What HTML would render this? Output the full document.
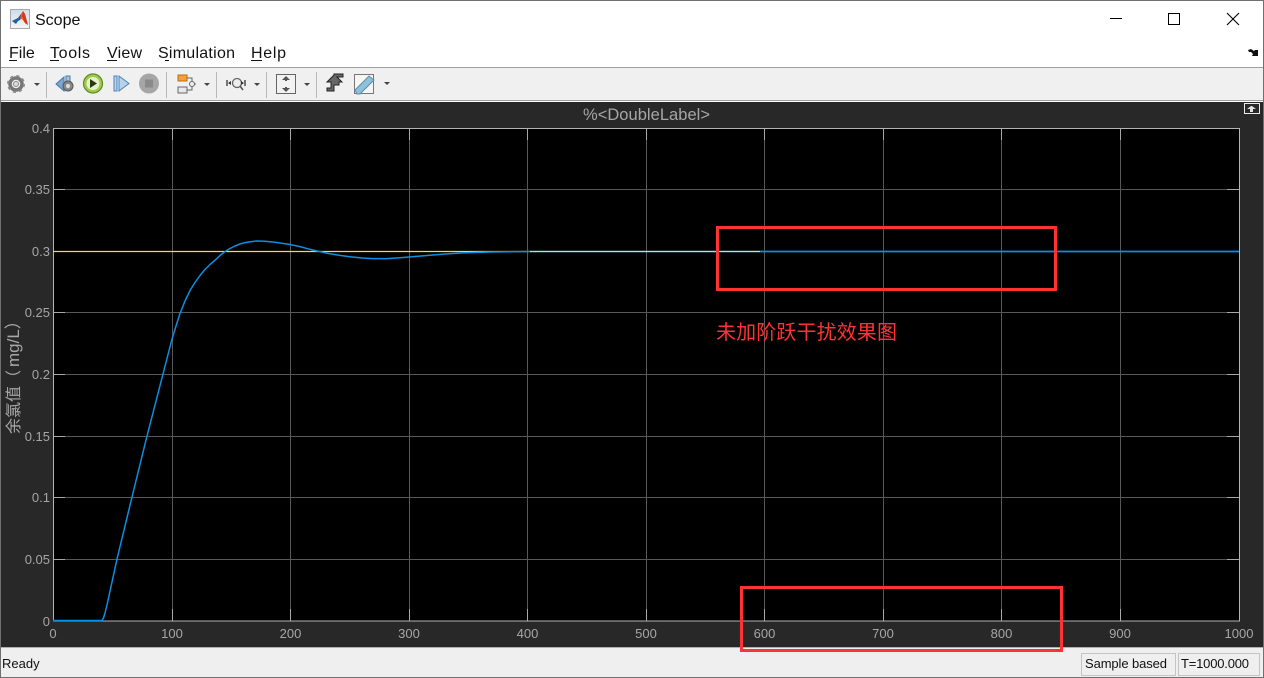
<!DOCTYPE html>
<html><head><meta charset="utf-8"><title>Scope</title>
<style>
html,body{margin:0;padding:0;width:1264px;height:678px;overflow:hidden;background:#fff}
svg{display:block;position:absolute;left:0;top:0}
text{font-family:"Liberation Sans","Noto Sans CJK SC",sans-serif}
</style></head><body>
<svg width="1264" height="678" viewBox="0 0 1264 678" xmlns="http://www.w3.org/2000/svg">
<defs>
<linearGradient id="ic" x1="0" y1="0" x2="0" y2="1"><stop offset="0" stop-color="#cfdcea"/><stop offset="1" stop-color="#f4f6f8"/></linearGradient>
</defs>
<rect width="1264" height="678" fill="#fff"/>
<!-- toolbar -->
<rect x="0" y="67" width="1264" height="34" fill="#f0f0f0"/>
<rect x="0" y="67" width="1264" height="1" fill="#a0a0a0"/>
<rect x="0" y="100" width="1264" height="1" fill="#a0a0a0"/>
<!-- dark -->
<rect x="0" y="102" width="1264" height="545" fill="#282828"/>
<!-- status -->
<rect x="0" y="647" width="1264" height="31" fill="#efefef"/>
<rect x="0" y="647" width="1264" height="1" fill="#b0b0b0"/>
<!-- window border -->
<rect x=".5" y=".5" width="1263" height="677" fill="none" stroke="#707070"/>

<!-- title bar -->
<rect x="10.500" y="9.500" width="19" height="19" fill="url(#ic)" stroke="#a8a8a8"/>
<path d="M12 21l6-3 5-7 2 3 3 11-3-2-3-4-3 1-3 3z" fill="#e8641b"/>
<path d="M12 21l6-3 3-4-1 6-2 1-2 3z" fill="#1d5fa8"/>
<path d="M23 11l2 3 3 11-3-2-3-7z" fill="#d9341c"/>
<text x="35" y="25" font-size="16" fill="#111">Scope</text>
<rect x="1110" y="18" width="12" height="1" fill="#000"/>
<rect x="1168.500" y="13.500" width="11" height="11" fill="none" stroke="#000"/>
<path d="M1227 13l12 12M1239 13l-12 12" stroke="#000" stroke-width="1.1" fill="none"/>

<!-- menu -->
<g font-size="16" fill="#111">
<text x="9" y="58">File</text>
<text x="50" y="58" textLength="40">Tools</text>
<text x="107" y="58" textLength="35">View</text>
<text x="158" y="58" textLength="77">Simulation</text>
<text x="251" y="58" textLength="35">Help</text>
</g>
<g fill="#111">
<rect x="9" y="60" width="8" height="1"/>
<rect x="50" y="60" width="9" height="1"/>
<rect x="107" y="60" width="10" height="1"/>
<rect x="165" y="60" width="4" height="1"/>
<rect x="251" y="60" width="11" height="1"/>
</g>
<path d="M1248 50l3-1 3 2 1-1 3 0v6h-6l1-2-2-2-2 0z" fill="#111"/>

<!-- toolbar icons -->
<g>
<circle cx="16" cy="84" r="6" fill="none" stroke="#777" stroke-width="3.500"/>
<circle cx="16" cy="84" r="8" fill="none" stroke="#8a8a8a" stroke-width="2" stroke-dasharray="3 3.300"/>
<circle cx="16" cy="84" r="2.500" fill="#ddd" stroke="#888"/>
<path d="M34 83h6l-3 3z" fill="#444"/>
<rect x="46" y="72" width="1" height="26" fill="#b8b8b8"/>
<path d="M56 84l8-7v14z" fill="#7ba6cf" stroke="#4a78a8"/>
<path d="M66 76h4v9h-4z" fill="#a9c5df" stroke="#4a78a8"/>
<circle cx="68" cy="86" r="5" fill="#888" stroke="#555"/>
<circle cx="68" cy="86" r="2" fill="#ddd"/>
<circle cx="93" cy="83.500" r="9.500" fill="#9ccb4a" stroke="#5f8a26" stroke-width="1.200"/>
<circle cx="93" cy="83.500" r="6.500" fill="#e6f2c8"/>
<path d="M90 79l7 4.500-7 4.500z" fill="#2c3a14"/>
<rect x="114" y="76" width="3" height="15" fill="#b8d2ea" stroke="#4a82c0"/>
<path d="M119 76l10 7.500-10 7.500z" fill="#b8d2ea" stroke="#4a82c0"/>
<circle cx="149" cy="83.500" r="10" fill="#a6a6a6"/>
<rect x="145" y="79.500" width="8" height="8" fill="#8a8a8a"/>
<rect x="166" y="72" width="1" height="26" fill="#b8b8b8"/>
<rect x="178" y="75" width="9" height="6" fill="#f0a040" stroke="#c46a10"/>
<rect x="178" y="87" width="9" height="6" fill="#e8e8e8" stroke="#666"/>
<path d="M187 78h5v3M187 90h5v-3M192 84h4" fill="none" stroke="#666"/>
<circle cx="192" cy="84" r="2.500" fill="#eee" stroke="#666"/>
<path d="M204 83h6l-3 3z" fill="#444"/>
<rect x="216" y="72" width="1" height="26" fill="#b8b8b8"/>
<circle cx="237" cy="83" r="4.500" fill="#eee" stroke="#666" stroke-width="1.300"/>
<path d="M240 86l3 4" stroke="#555" stroke-width="1.600"/>
<path d="M227 80v6M245 80v6" stroke="#333" stroke-width="1.300"/>
<path d="M228 83l3-2v4zM244 83l-3-2v4z" fill="#333"/>
<path d="M254 83h6l-3 3z" fill="#444"/>
<rect x="266" y="72" width="1" height="26" fill="#b8b8b8"/>
<rect x="276.500" y="74.500" width="19" height="19" fill="#f2f2f2" stroke="#666"/>
<path d="M286 76l-4 4h8zM286 92l-4-4h8z" fill="#555"/>
<rect x="285" y="79" width="2" height="2" fill="#555"/>
<rect x="285" y="87" width="2" height="2" fill="#555"/>
<path d="M304 83h6l-3 3z" fill="#444"/>
<rect x="316" y="72" width="1" height="26" fill="#b8b8b8"/>
<path d="M327 82l7-7v-1h9v3h-6l5 5h-3v3h-5v6h-7v-3h4v-6z" fill="#666" stroke="#222"/>
<rect x="354.500" y="74.500" width="19" height="19" fill="#f5f5f5" stroke="#777"/>
<path d="M355 90l14-14 5 4-14 14h-3z" fill="#8dc0dc" stroke="#5d8ea8"/>
<path d="M384 82h6l-3 3z" fill="#444"/>
</g>

<!-- plot -->
<rect x="53" y="128" width="1186" height="493" fill="#000"/>
<g stroke="#585858" stroke-width="1" fill="none" shape-rendering="crispEdges">
<path d="M172.500 128V621M290.500 128V621M409.500 128V621M527.500 128V621M646.500 128V621M764.500 128V621M883.500 128V621M1001.500 128V621M1120.500 128V621"/>
<path d="M53 189.500H1239M53 312.500H1239M53 374.500H1239M53 436.500H1239M53 497.500H1239M53 559.500H1239"/>
</g>
<g stroke="#a8a8a8" stroke-width="1" fill="none" shape-rendering="crispEdges">
<path d="M172.500 621v-12M290.500 621v-12M409.500 621v-12M527.500 621v-12M646.500 621v-12M764.500 621v-12M883.500 621v-12M1001.500 621v-12M1120.500 621v-12"/>
<path d="M172.500 128v12M290.500 128v12M409.500 128v12M527.500 128v12M646.500 128v12M764.500 128v12M883.500 128v12M1001.500 128v12M1120.500 128v12"/>
<path d="M53 189.500h12M53 312.500h12M53 374.500h12M53 436.500h12M53 497.500h12M53 559.500h12"/>
<path d="M1239 189.500h-12M1239 312.500h-12M1239 374.500h-12M1239 436.500h-12M1239 497.500h-12M1239 559.500h-12"/>
</g>
<rect x="53.500" y="128.500" width="1186" height="492.500" fill="none" stroke="#b4b4b4" shape-rendering="crispEdges"/>

<!-- signals -->
<path d="M530 251.500H1239" stroke="#0a8fe6" stroke-width="1.500" fill="none"/>
<path d="M53 251.500H760" stroke="#e6e632" stroke-width="1.200" fill="none"/>
<path d="M760 251.500H1239" stroke="#0a8fe6" stroke-width="1.500" fill="none"/>
<polyline fill="none" stroke="#0a8fe6" stroke-width="1.500" stroke-linejoin="round" points="53,620.500 102,620.500 103.500,618 105,613 107,605 112,582 117,559 132,497 147,436 163,374 172,339 176,326 180,313.500 185,301 190,290.500 195,282.500 200,275.500 205,269.500 210,264.500 215,260.200 220,255.500 225,251.500 230,248.500 235,246 240,244 245,242.600 250,241.700 257,241 265,241.200 275,242.200 290,244.500 300,246.600 308,248.800 317,251 328,253.400 339,255.300 350,256.800 362,258 373,258.600 385,258.700 400,257.800 415,256.500 430,255.200 445,254 465,252.800 490,252 530,251.500"/>

<!-- axis labels -->
<g font-size="13" fill="#a6a6a6" text-anchor="end">
<text x="50" y="133">0.4</text>
<text x="50" y="194">0.35</text>
<text x="50" y="256">0.3</text>
<text x="50" y="317">0.25</text>
<text x="50" y="379">0.2</text>
<text x="50" y="441">0.15</text>
<text x="50" y="502">0.1</text>
<text x="50" y="564">0.05</text>
<text x="50" y="626">0</text>
</g>
<g font-size="13" fill="#a6a6a6" text-anchor="middle">
<text x="53" y="638">0</text>
<text x="172" y="638">100</text>
<text x="290.500" y="638">200</text>
<text x="409" y="638">300</text>
<text x="527.500" y="638">400</text>
<text x="646" y="638">500</text>
<text x="764.500" y="638">600</text>
<text x="883" y="638">700</text>
<text x="1001.500" y="638">800</text>
<text x="1120" y="638">900</text>
<text x="1239" y="638">1000</text>
</g>
<text x="583" y="120" font-size="16.500" fill="#a6a6a6" textLength="127">%&lt;DoubleLabel&gt;</text>
<text transform="translate(19,434) rotate(-90)" font-size="16" fill="#a6a6a6">余氯值（</text>
<text transform="translate(19,367) rotate(-90)" font-size="17" fill="#a6a6a6">mg/L）</text>

<!-- undock button -->
<rect x="1244.500" y="103.500" width="15" height="10" fill="#282828" stroke="#e8e8e8"/>
<path d="M1247 109l4-3 1 0 4 3h-3v3h-3v-3z" fill="#e0e0e0"/>

<!-- red annotations -->
<rect x="717.500" y="227.500" width="338" height="62" fill="none" stroke="#ff3333" stroke-width="3"/>
<rect x="741.500" y="587.500" width="320" height="63" fill="none" stroke="#ff3333" stroke-width="3"/>
<text x="716" y="339" font-size="20" fill="#ff3333" textLength="181">未加阶跃干扰效果图</text>

<!-- status bar -->
<text x="2" y="668" font-size="13" fill="#111">Ready</text>
<rect x="1081.500" y="653.500" width="94" height="22" fill="#efefef" stroke="#c4c4c4"/>
<rect x="1178.500" y="653.500" width="81" height="22" fill="#efefef" stroke="#c4c4c4"/>
<text x="1085" y="668" font-size="13" fill="#111" textLength="82">Sample based</text>
<text x="1181" y="668" font-size="13" fill="#111" textLength="68">T=1000.000</text>
</svg>
</body></html>
